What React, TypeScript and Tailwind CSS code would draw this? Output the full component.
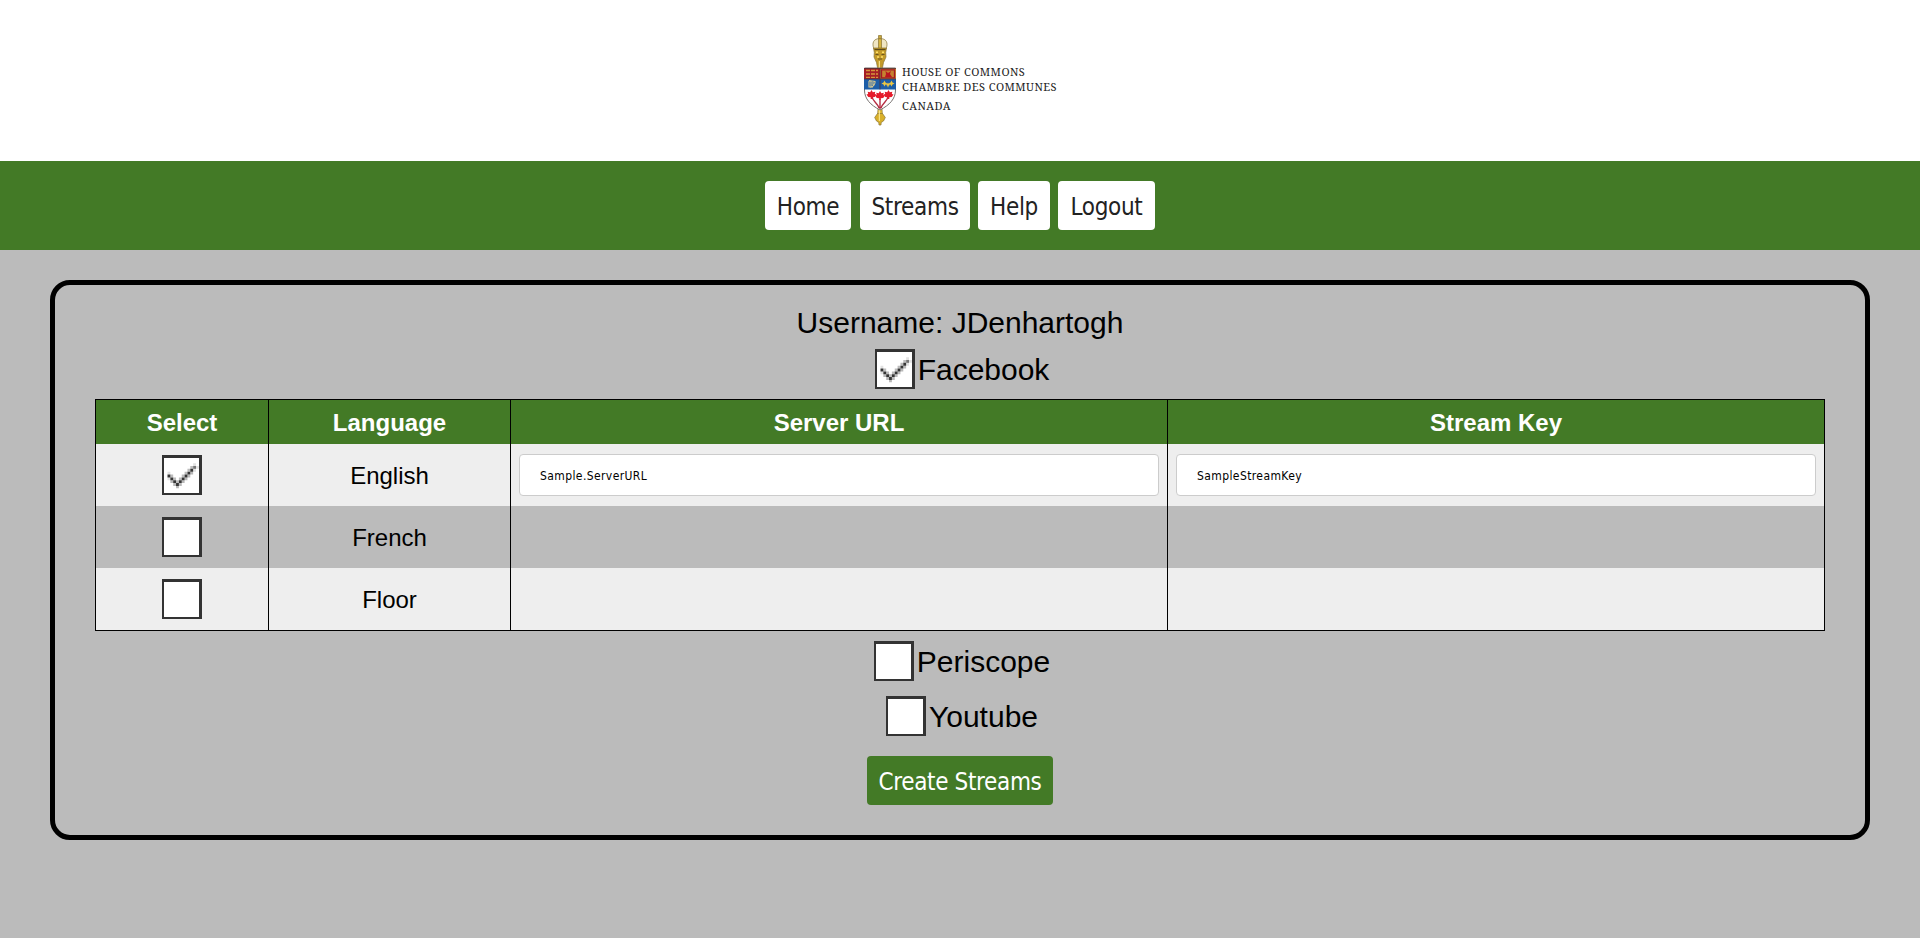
import React from "react";

const UI = "font-['DejaVu_Sans_Condensed','DejaVu_Sans',sans-serif] [font-stretch:condensed]";

const LEAF = "M0-5l1.300 2.300L3.800-3.300 3.300-1 5-.5 3.200 2 .8 2.300V4H-.8V2.300L-3.200 2-5-.5-3.300-1-3.800-3.300-1.300-2.700z";

function Mace() {
  return (
    <svg width="34" height="94" viewBox="0 0 34 94" className="shrink-0">
      <g stroke="#8a7434" strokeWidth="0.7">
        <path d="M15.500 2.500h3v3.500h-3z" fill="#c9a83c" />
        <path d="M17 5.500C10.500 5.500 8.500 10 11 16h12C25.500 10 23.500 5.500 17 5.500z" fill="#f0e6c4" />
        <path d="M15.500 5.800h3v10h-3z" fill="#d9b63f" />
        <path d="M10.500 15h13l-.8 4.500.3 4.500-2.500 5.500-1.200 6h-4.600l-1.200-6L11 24l.3-4.500z" fill="#c39a2a" />
        <path d="M15 76h4l.4 6h-4.800z" fill="#e2bd35" />
        <path d="M14.500 80.500h5l2.800 4-1.800 3.500-2.300 1.500-.2 2.500h-2l-.2-2.500-2.300-1.500-1.800-3.500z" fill="#d9b02a" />
      </g>
      <path d="M11.500 16.500h11" stroke="#5d4a18" strokeWidth="1.200" />
      <path d="M12.500 21.500h3m3 0h3M15 26h4" stroke="#6d5720" strokeWidth="1.200" />
      <path d="M13 19.300h2m4 0h2M14 24h2m2 0h2" stroke="#ffe16a" strokeWidth="1.500" />
      <path d="M16.300 28v7M16.300 77v11" stroke="#fff0a0" />
      <path d="M1.500 35h31v22c0 9-6 15-15.500 20C7.500 72 1.500 66 1.500 57z" fill="#fff" stroke="#77716f" />
      <path d="M1 35h16v11H1z" fill="#a51e25" />
      <path d="M17 35h16v11H17z" fill="#c58230" />
      <path d="M3 37.500h12M3 41h12M3 44.300h12" stroke="#d6953b" strokeWidth="1.300" strokeDasharray="4 1" />
      <path d="M18.500 36.800h13v8h-13z" fill="none" stroke="#a51922" strokeWidth="1.300" />
      <path d="M22.500 38l2.500 2 3-2-1 3 2 3h-7l1-3z" fill="#b9161f" />
      <path d="M1 46h32v10.500H1z" fill="#1d5ea8" />
      <path d="M17 35v21.500M1 46h32M1 35.500h32" stroke="#503238" strokeWidth="0.800" />
      <path d="M6 47.500c2 1 4 0 6 1 .5 2-1.500 5-4.500 6M6 48v6h4M8 48.500v5M10 49v3" stroke="#d9c990" strokeWidth="1.100" fill="none" />
      <path
        d="M21.500 47.500l1 2 2 1-2 1-1 2-1-2-2-1 2-1zM28.500 47.500l1 2 2 1-2 1-1 2-1-2-2-1 2-1zM25 49.500l.8 1.500 1.700.8-1.700.7-.8 2.300-.8-2.300-1.700-.7 1.700-.8z"
        fill="#edc741"
      />
      <path d="M9 63c0 5 5 6 7 12M25 63c0 5-5 6-7 12M17 66v10" stroke="#b52c42" strokeWidth="1.400" fill="none" />
      <g fill="#e51b2b">
        <path d={LEAF} transform="translate(8.500 62)" />
        <path d={LEAF} transform="translate(25.500 62)" />
        <path d={LEAF} transform="translate(17 63)" />
      </g>
    </svg>
  );
}

function Tick() {
  return (
    <svg width="35" height="35" viewBox="0 0 35 35">
      <g transform="translate(3.500 8) scale(2.850)">
        <path
          d="M0 2h1v1H0zM9-1h1v1H9zM10 0h1v1h-1zM0 4h1v1H0zM9 1h1v1H9z"
          fill="#e2e2e2"
        />
        <path
          d="M1 5h1v1H1zM2 6h1v1H2zM3 7h1v.8H3zM4 6h1v1H4zM5 5h1v1H5zM6 4h1v1H6zM7 3h1v1H7zM8 2h1v1H8z"
          fill="#b8b8b8"
        />
        <path
          d="M1 3h1v1H1zM2 4h1v1H2zM3 5h1v1H3zM4 4h1v1H4zM5 3h1v1H5zM6 2h1v1H6zM7 1h1v1H7zM8 0h1v1H8z"
          fill="#bcbcbc"
        />
        <path
          d="M0 3h1v1H0zM1 4h1v1H1zM2 5h1v1H2zM3 6h1v1H3zM4 5h1v1H4zM5 4h1v1H5zM6 3h1v1H6zM7 2h1v1H7zM8 1h1v1H8z"
          fill="#363636"
        />
        <path d="M9 0h1v1H9z" fill="#777" />
      </g>
    </svg>
  );
}

function CheckBox({ checked = false }: { checked?: boolean }) {
  return (
    <span className="block size-10 shrink-0 border-t-[3px] border-r-[3px] border-b-2 border-l-2 border-[#333] bg-white">
      {checked && <Tick />}
    </span>
  );
}

function Field({ value }: { value: string }) {
  return (
    <input
      readOnly
      defaultValue={value}
      className={`${UI} mx-2 h-[42px] min-w-0 flex-1 rounded border border-[#ccc] bg-white px-5 pt-0.5 text-[12px] tracking-[0.400px] text-black outline-none`}
    />
  );
}

function NavButton({ label, className }: { label: string; className: string }) {
  return (
    <button className={`${UI} h-[49px] rounded bg-white pt-0.5 text-center text-[24px] tracking-[-0.300px] text-[#222] ${className}`}>
      {label}
    </button>
  );
}

const rows = [
  { language: "English", checked: true, shade: "*:bg-[#eee]", url: "Sample.ServerURL", streamKey: "SampleStreamKey" },
  { language: "French", checked: false, shade: "*:bg-[#bbb]" },
  { language: "Floor", checked: false, shade: "*:bg-[#eee]" },
];

const GRID = "grid grid-cols-[172px_241px_656px_656px] gap-x-px";

export default function App() {
  return (
    <div className="flex h-[938px] flex-col bg-[#bbb] font-['Liberation_Sans',Arial,sans-serif] text-black">
      <header className="flex h-[161px] shrink-0 justify-center bg-white pt-[33px]">
        <div className="flex w-[194px]">
          <Mace />
          <div className="ml-[5px] pt-[31px] font-['Noto_Serif','DejaVu_Serif',serif] text-[11px] leading-[15px] tracking-[0.450px] whitespace-nowrap text-[#222]">
            <p>HOUSE OF COMMONS</p>
            <p>CHAMBRE DES COMMUNES</p>
            <p className="mt-1">CANADA</p>
          </div>
        </div>
      </header>

      <nav className="flex h-[89px] shrink-0 items-center justify-center bg-[#437a26]">
        <NavButton label="Home" className="mr-[9px] w-[86px]" />
        <NavButton label="Streams" className="mr-2 w-[110px]" />
        <NavButton label="Help" className="mr-2 w-[72px]" />
        <NavButton label="Logout" className="w-[97px]" />
      </nav>

      <main className="mx-[50px] mt-[30px] flex h-[560px] flex-col items-center rounded-[20px] border-[5px] border-black px-10 pt-5 text-[30px] leading-[36px]">
        <p>Username: JDenhartogh</p>
        <label className="mt-2 flex h-10 items-center gap-[3px] pl-1">
          <CheckBox checked />
          <span className="pt-0.5">Facebook</span>
        </label>

        <section className="mt-[10px] w-[1730px] border border-black text-[24px]">
          <div className={`${GRID} h-11 bg-black text-center leading-[45px] font-bold text-white`}>
            {["Select", "Language", "Server URL", "Stream Key"].map((h) => (
              <div key={h} className="bg-[#437a26]">{h}</div>
            ))}
          </div>
          {rows.map((r) => (
            <div
              key={r.language}
              className={`${GRID} h-[62px] bg-black *:flex *:items-center *:justify-center ${r.shade}`}
            >
              <div><CheckBox checked={r.checked} /></div>
              <div className="pt-0.5">{r.language}</div>
              <div>{r.url && <Field value={r.url} />}</div>
              <div>{r.streamKey && <Field value={r.streamKey} />}</div>
            </div>
          ))}
        </section>

        <label className="mt-[10px] flex h-10 items-center gap-[3px] pl-1">
          <CheckBox />
          <span className="pt-0.5">Periscope</span>
        </label>
        <label className="mt-[15px] flex h-10 items-center gap-[3px] pl-1">
          <CheckBox />
          <span className="pt-0.5">Youtube</span>
        </label>
        <button className={`${UI} mt-5 h-[49px] w-[186px] rounded bg-[#437a26] pt-0.5 text-[24px] tracking-[-0.350px] whitespace-nowrap text-white`}>
          Create Streams
        </button>
      </main>
    </div>
  );
}
